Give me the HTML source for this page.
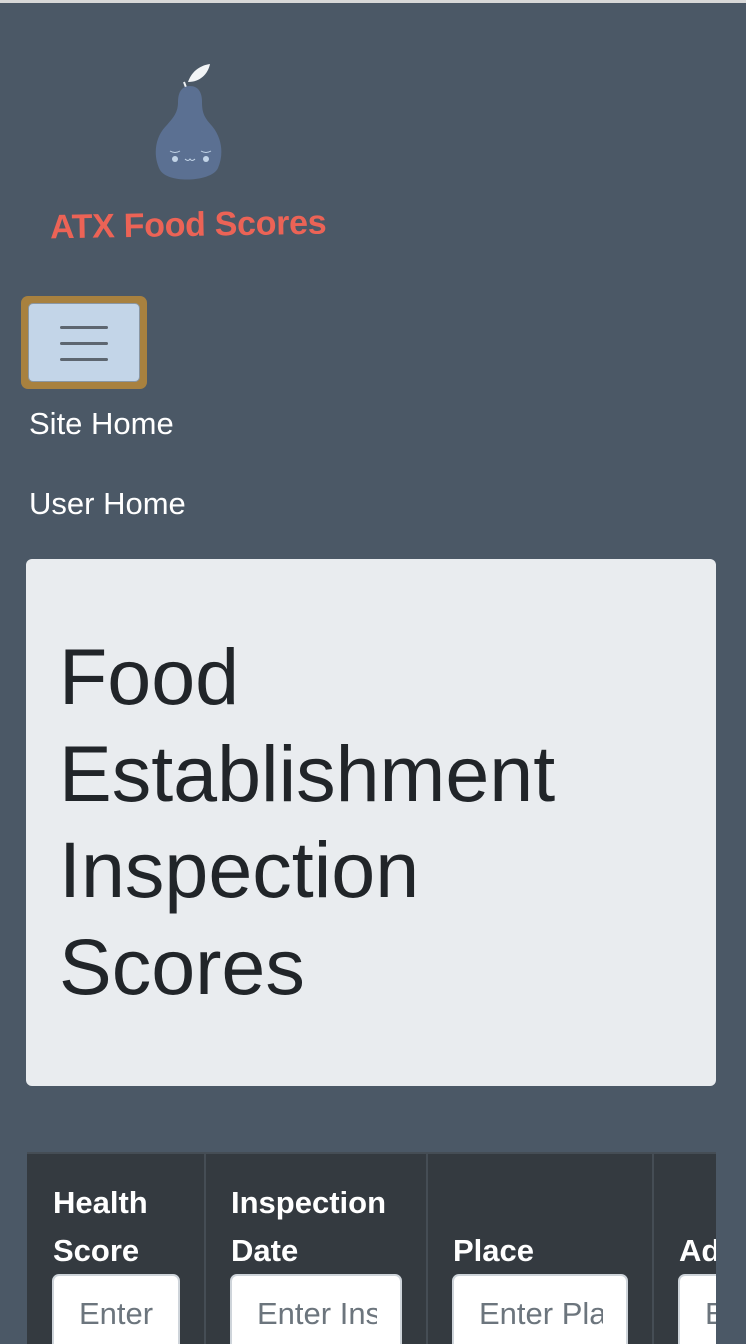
<!DOCTYPE html>
<html><head><meta charset="utf-8"><style>
body{margin:0;width:746px;height:1337px;background:#4b5866;overflow:hidden;position:relative;font-family:"Liberation Sans",sans-serif}
.a{position:absolute}
.top{left:0;top:0;width:746px;height:3px;background:#d8d8d8}
.logo{left:50px;top:206px;font:bold 34px "Liberation Sans",sans-serif;color:#ec6356;transform:rotate(-1deg);letter-spacing:-0.3px}
.focus{left:21px;top:296px;width:126px;height:93px;border-radius:7px;background:#a8813f}
.btn{left:28px;top:303px;width:112px;height:79px;border-radius:5px;background:#c3d5e8;border:1px solid #8a97a4;box-sizing:border-box}
.bar{position:absolute;left:31px;width:48px;height:3px;border-radius:2px;background:#5d6670}
.nav{color:#fff;font-size:31px;left:29px}
.jumbo{left:26px;top:559px;width:690px;height:527px;background:#e9ecef;border-radius:6px}
.jumbo h1{position:absolute;left:33px;top:70px;margin:0;font-weight:normal;font-size:79px;line-height:96.5px;color:#212529}
.table{left:27px;top:1152px;width:689px;height:190px;background:#343a40;border-top:2px solid #454d55;overflow:hidden}
.col{position:absolute;top:0;height:200px;border-left:2px solid #454d55}
.th{position:absolute;color:#fff;font-weight:bold;font-size:31px;line-height:48px}
.in{position:absolute;top:120px;height:80px;background:#fff;border:2px solid #ced4da;border-radius:7px;box-sizing:border-box;color:#6c757d;font-size:31px;padding:20px 0 0 25px;overflow:hidden;white-space:nowrap}
.in span{display:inline-block;overflow:hidden;vertical-align:top}
</style></head><body>
<div class="a top"></div>
<svg class="a" style="left:150px;top:62px" width="80" height="124" viewBox="0 0 80 124">
<path d="M37 28 L34 20" stroke="#eef1f4" stroke-width="2"/>
<path d="M38 20 C42 8 52 3 60 2 C58 12 50 20 38 20Z" fill="#f2f4f6"/>
<path d="M40 24 C48 24 52 30 52 40 C52 52 55 56 62 64 C72 76 74 92 68 106 C62 120 18 122 10 108 C2 92 6 74 16 64 C24 55 28 50 28 40 C28 30 32 24 40 24Z" fill="#5b7092"/>
<circle cx="25" cy="97" r="3" fill="#c3d5e8"/><circle cx="56" cy="97" r="3" fill="#c3d5e8"/>
<path d="M20 89 q5 3 10 0 M51 89 q5 3 10 0 M35 97 q3 3 5 0 q2 3 5 0" stroke="#c3d5e8" stroke-width="1" fill="none"/>
</svg>
<div class="a logo">ATX Food Scores</div>
<div class="a focus"></div>
<div class="a btn"><div class="bar" style="top:22px"></div><div class="bar" style="top:38px"></div><div class="bar" style="top:54px"></div></div>
<div class="a nav" style="top:406px">Site Home</div>
<div class="a nav" style="top:486px">User Home</div>
<div class="a jumbo"><h1>Food<br>Establishment<br>Inspection<br>Scores</h1></div>
<div class="a table">
<div class="th" style="left:26px;top:25px">Health<br>Score</div>
<div class="col" style="left:177px"></div>
<div class="th" style="left:204px;top:25px">Inspection<br>Date</div>
<div class="col" style="left:399px"></div>
<div class="th" style="left:426px;top:73px">Place</div>
<div class="col" style="left:625px"></div>
<div class="th" style="left:652px;top:73px">Address</div>
<div class="in" style="left:25px;width:128px"><span style="width:78px">Enter Health</span></div>
<div class="in" style="left:203px;width:172px"><span style="width:120px">Enter Inspection</span></div>
<div class="in" style="left:425px;width:176px"><span style="width:124px">Enter Place</span></div>
<div class="in" style="left:651px;width:120px">Enter</div>
</div>
</body></html>
